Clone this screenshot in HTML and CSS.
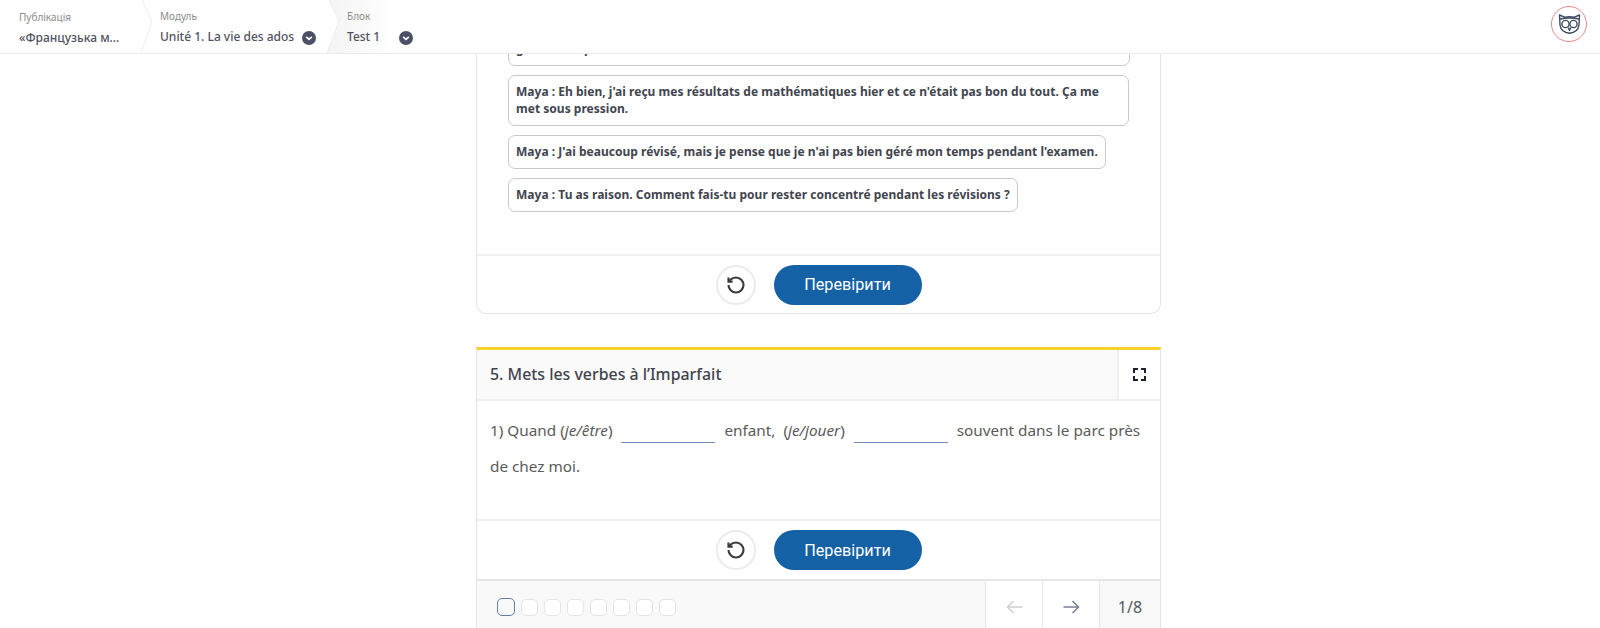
FILE: index.html
```html
<!DOCTYPE html>
<html lang="uk">
<head>
<meta charset="utf-8">
<title>Test 1</title>
<link rel="stylesheet" href="styles.css">
</head>
<body>
<header class="topbar">
  <nav class="crumbs">
    <div class="crumb crumb-a">
      <span class="crumb-label">Публікація</span>
      <span class="crumb-value">«Французька м...</span>
      <svg class="crumb-tip" width="14" height="53" viewBox="0 0 14 53"><path d="M1 0 L11 21 L0 53" fill="none" stroke="#ececec"/></svg>
    </div>
    <div class="crumb crumb-b">
      <span class="crumb-label">Модуль</span>
      <span class="crumb-row">
        <span class="crumb-value">Unité 1. La vie des ados</span>
        <svg class="crumb-drop" width="14" height="14" viewBox="0 0 14 14"><circle cx="7" cy="7" r="7" fill="#4b5064"/><path d="M4.2 5.8 L7 8.4 L9.8 5.8" fill="none" stroke="#fff" stroke-width="1.6"/></svg>
      </span>
      <svg class="crumb-tip" width="14" height="53" viewBox="0 0 14 53"><path d="M2 0 L12 21 L0 53 L0 0 Z" fill="#fff"/><path d="M2 0 L12 21 L0 53" fill="none" stroke="#ececec"/></svg>
    </div>
    <div class="crumb crumb-c">
      <span class="crumb-label">Блок</span>
      <span class="crumb-row crumb-row-c">
        <span class="crumb-value">Test 1</span>
        <svg class="crumb-drop" width="14" height="14" viewBox="0 0 14 14"><circle cx="7" cy="7" r="7" fill="#4b5064"/><path d="M4.2 5.8 L7 8.4 L9.8 5.8" fill="none" stroke="#fff" stroke-width="1.6"/></svg>
      </span>
    </div>
  </nav>
  <div class="avatar">
    <svg width="23" height="20" viewBox="0 0 23 20" fill="none" stroke="#3f4a5f" stroke-width="1.4" stroke-linejoin="round">
      <path d="M1.5 1 L6.5 3.2 Q11.5 2.2 16.5 3.2 L21.5 1 L21 11 Q20 18.5 11.5 19.2 Q3 18.5 2 11 Z"/>
      <circle cx="7.5" cy="10" r="3.6"/>
      <circle cx="15.5" cy="10" r="3.6"/>
      <path d="M10.2 13.5 L11.5 16.5 L12.8 13.5"/>
      <path d="M2 5 Q11.5 3 21 5"/>
    </svg>
  </div>
</header>

<main class="column">
  <section class="card card-first">
    <div class="options">
      <div class="option option-wide">Maya : Bonjour Léo, je ne suis pas très en forme aujourd'hui, tu sais, c'est vraiment<br>gentil à toi pour moi.</div>
      <div class="option">Maya : Eh bien, j'ai reçu mes résultats de mathématiques hier et ce n'était pas bon du tout. Ça me met sous pression.</div>
      <div class="option">Maya : J'ai beaucoup révisé, mais je pense que je n'ai pas bien géré mon temps pendant l'examen.</div>
      <div class="option">Maya : Tu as raison. Comment fais-tu pour rester concentré pendant les révisions ?</div>
    </div>
    <div class="actions">
      <button class="reset" type="button" aria-label="Скинути">
        <svg width="20" height="20" viewBox="0 0 24 24" fill="none" stroke="#3c3c3c" stroke-width="2.6"><path d="M3 12a9 9 0 1 0 9-9 9.75 9.75 0 0 0-6.74 2.74L3 8"/><path d="M3 3v5h5"/></svg>
      </button>
      <button class="check" type="button">Перевірити</button>
    </div>
  </section>

  <section class="card card-second">
    <div class="card-head">
      <h2 class="card-title">5. Mets les verbes à l’Imparfait</h2>
      <button class="expand" type="button" aria-label="На весь екран">
        <svg width="13" height="13" viewBox="0 0 13 13" fill="none" stroke="#1d2233" stroke-width="2"><path d="M1 5V1H5M8 1H12V5M12 8V12H8M5 12H1V8"/></svg>
      </button>
    </div>
    <div class="exercise">
      <p class="exercise-text">1) Quand (<em>je/être</em>) <span class="blank"></span> enfant,&nbsp; (<em>je/jouer</em>) <span class="blank"></span> souvent dans le parc près de chez moi.</p>
    </div>
    <div class="actions actions-tall">
      <button class="reset" type="button" aria-label="Скинути">
        <svg width="20" height="20" viewBox="0 0 24 24" fill="none" stroke="#3c3c3c" stroke-width="2.6"><path d="M3 12a9 9 0 1 0 9-9 9.75 9.75 0 0 0-6.74 2.74L3 8"/><path d="M3 3v5h5"/></svg>
      </button>
      <button class="check" type="button">Перевірити</button>
    </div>
    <div class="pager">
      <div class="dots">
        <span class="dot dot-active"></span><span class="dot"></span><span class="dot"></span><span class="dot"></span><span class="dot"></span><span class="dot"></span><span class="dot"></span><span class="dot"></span>
      </div>
      <div class="pager-cell pager-arrow">
        <svg width="17" height="14" viewBox="0 0 17 14" fill="none" stroke="#cfd0d3" stroke-width="1.5"><path d="M16.5 7H1.5M7.5 1L1.5 7L7.5 13"/></svg>
      </div>
      <div class="pager-cell pager-arrow">
        <svg width="17" height="14" viewBox="0 0 17 14" fill="none" stroke="#7b8196" stroke-width="1.5"><path d="M0.5 7H15.5M9.5 1L15.5 7L9.5 13"/></svg>
      </div>
      <div class="pager-cell pager-count">1/8</div>
    </div>
  </section>
</main>
</body>
</html>
```
FILE: styles.css
```css
* { box-sizing: border-box; }

html, body {
  margin: 0;
  height: 628px;
  overflow: hidden;
  background: #fff;
}

body {
  font-family: "Noto Sans", "Liberation Sans", sans-serif;
  color: #4a4a4a;
}

.topbar {
  position: absolute;
  top: 0;
  left: 0;
  right: 0;
  z-index: 5;
  height: 54px;
  display: flex;
  justify-content: space-between;
  background: #fff;
  border-bottom: 1px solid #ececec;
}

.crumbs { display: flex; }

.crumb {
  position: relative;
  display: flex;
  flex-direction: column;
  gap: 6px;
  padding-top: 11px;
}

.crumb-a { width: 141px; padding-left: 19px; }
.crumb-b { width: 186px; padding-left: 19px; padding-top: 10px; }
.crumb-c {
  width: 90px;
  padding-left: 20px;
  padding-top: 10px;
  background: linear-gradient(90deg, #f4f4f4 0, #fff 68px);
}

.crumb-label {
  font-size: 10px;
  line-height: 13px;
  color: #8b8b8b;
}

.crumb-value {
  font-size: 12px;
  line-height: 15px;
  font-weight: 500;
  color: #50535f;
  white-space: nowrap;
}

.crumb-row { display: flex; align-items: flex-start; gap: 8px; }
.crumb-row-c { gap: 19px; }
.crumb-drop { flex: none; margin-top: 2px; }

.crumb-tip {
  position: absolute;
  top: 0;
  left: 100%;
  z-index: 1;
}

.avatar {
  width: 36px;
  height: 36px;
  margin: 6px 13px 0 0;
  border: 1px solid #e98a85;
  border-radius: 50%;
  display: flex;
  align-items: center;
  justify-content: center;
}

.column {
  width: 685px;
  margin-left: 476px;
}

.card {
  background: #fff;
  border: 1px solid #e4e4e4;
}

.card-first {
  border-radius: 0 0 10px 10px;
  border-top: 0;
}

.options {
  display: flex;
  flex-direction: column;
  align-items: flex-start;
  gap: 9px;
  padding: 14.5px 31px 42.5px;
}

.option {
  max-width: 622px;
  padding: 7.5px 7px;
  border: 1px solid #c9c9c9;
  border-radius: 7px;
  font-size: 12px;
  line-height: 17px;
  font-weight: 700;
  letter-spacing: 0.02px;
  color: #42454f;
}

.option-wide { width: 622px; }

.actions {
  height: 59px;
  display: flex;
  align-items: center;
  justify-content: center;
  gap: 18px;
  border-top: 2px solid #f0f0f0;
}

.actions-tall { height: 60px; }

.reset {
  width: 40px;
  height: 40px;
  padding: 0;
  display: flex;
  align-items: center;
  justify-content: center;
  background: #fff;
  border: 2px solid #ececec;
  border-radius: 50%;
}

.check {
  width: 148px;
  height: 40px;
  padding: 0;
  border: 0;
  border-radius: 20px;
  background: #1461a6;
  color: #fff;
  font-family: Roboto, "Liberation Sans", sans-serif;
  font-size: 16.2px;
}

.card-second {
  margin-top: 33px;
  border-top: 3px solid #fbd22c;
}

.card-head {
  height: 51px;
  display: flex;
  align-items: center;
  justify-content: space-between;
  background: #fafafa;
  border-bottom: 2px solid #f0f0f0;
}

.card-title {
  margin: 0 0 2px 13px;
  font-size: 15.9px;
  font-weight: 500;
  color: #41444d;
}

.expand {
  width: 43px;
  height: 49px;
  padding: 0;
  display: flex;
  align-items: center;
  justify-content: center;
  background: #fff;
  border: 0;
  border-left: 2px solid #f0f0f0;
}

.exercise {
  height: 118px;
  padding: 11px 14px 0 13px;
}

.exercise-text {
  margin: 0;
  font-size: 15.3px;
  line-height: 36px;
  color: #5a5a5a;
}

.blank {
  display: inline-block;
  width: 94px;
  height: 24px;
  margin: 0 5px;
  vertical-align: -7px;
  border-bottom: 1px solid #6f8fb5;
}

.pager {
  height: 54px;
  display: flex;
  align-items: stretch;
  background: #f9f9f9;
  border-top: 2px solid #e6e6e6;
}

.dots {
  flex: 1;
  display: flex;
  align-items: center;
  gap: 6px;
  padding-left: 20px;
}

.dot {
  width: 17px;
  height: 17px;
  background: #fff;
  border: 1px solid #e4e4e4;
  border-radius: 5px;
}

.dot-active {
  width: 18px;
  height: 18px;
  background: #f7f9fb;
  border: 1.5px solid #5f7fa8;
}

.pager-cell {
  display: flex;
  align-items: center;
  justify-content: center;
  border-left: 1px solid #e6e6e6;
}

.pager-arrow { width: 57px; background: #fff; }
.pager-count { width: 61px; font-size: 16px; color: #55585f; }
```
